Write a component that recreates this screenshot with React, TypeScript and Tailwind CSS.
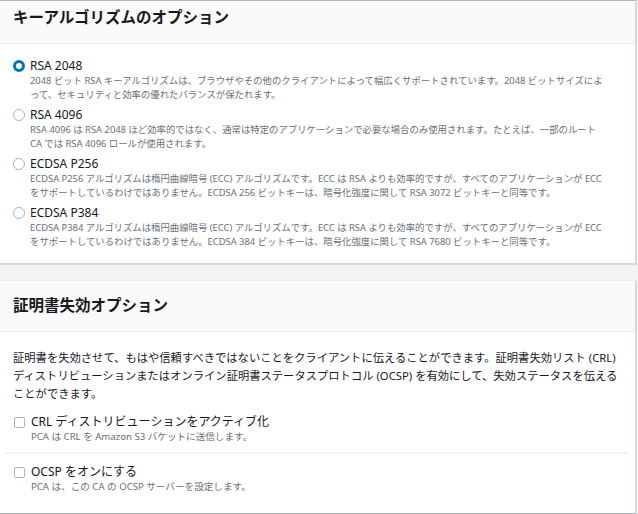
const font = { fontFamily: '"Noto Sans", "Noto Sans CJK JP", sans-serif' }

const keyOptions = [
  {
    id: "rsa2048",
    label: "RSA 2048",
    checked: true,
    desc: [
      "2048 ビット RSA キーアルゴリズムは、ブラウザやその他のクライアントによって幅広くサポートされています。2048 ビットサイズによ",
      "って、セキュリティと効率の優れたバランスが保たれます。",
    ],
  },
  {
    id: "rsa4096",
    label: "RSA 4096",
    checked: false,
    desc: [
      "RSA 4096 は RSA 2048 ほど効率的ではなく、通常は特定のアプリケーションで必要な場合のみ使用されます。たとえば、一部のルート",
      "CA では RSA 4096 ロールが使用されます。",
    ],
  },
  {
    id: "p256",
    label: "ECDSA P256",
    checked: false,
    desc: [
      "ECDSA P256 アルゴリズムは楕円曲線暗号 (ECC) アルゴリズムです。ECC は RSA よりも効率的ですが、すべてのアプリケーションが ECC",
      "をサポートしているわけではありません。ECDSA 256 ビットキーは、暗号化強度に関して RSA 3072 ビットキーと同等です。",
    ],
  },
  {
    id: "p384",
    label: "ECDSA P384",
    checked: false,
    desc: [
      "ECDSA P384 アルゴリズムは楕円曲線暗号 (ECC) アルゴリズムです。ECC は RSA よりも効率的ですが、すべてのアプリケーションが ECC",
      "をサポートしているわけではありません。ECDSA 384 ビットキーは、暗号化強度に関して RSA 7680 ビットキーと同等です。",
    ],
  },
]

const intro = [
  "証明書を失効させて、もはや信頼すべきではないことをクライアントに伝えることができます。証明書失効リスト (CRL)",
  "ディストリビューションまたはオンライン証明書ステータスプロトコル (OCSP) を有効にして、失効ステータスを伝える",
  "ことができます。",
]

const Radio = ({ checked }: { checked: boolean }) =>
  checked ? (
    <span className="mt-[2px] w-[12px] h-[12px] rounded-full border-[3.5px] border-[#0073bb] bg-white shrink-0" />
  ) : (
    <span className="mt-[2px] w-[12px] h-[12px] rounded-full border border-[#aab7b8] bg-white shrink-0" />
  )

const Checkbox = () => (
  <span className="mt-[3px] w-[11px] h-[11px] rounded-[2px] border border-[#aab7b8] bg-white shrink-0" />
)

export default function App() {
  return (
    <div className="w-[638px] h-[514px] bg-[#f2f3f3] overflow-hidden" style={font}>
      <section className="w-[637px] bg-white border-t border-r-2 border-b-2 border-t-[#aab7b8] border-r-[#d5dbdb] border-b-[#d5dbdb]">
        <div className="h-[43px] bg-[#fafafa] border-b border-[#eaeded] px-[13px] pt-[6px]">
          <h2 className="text-[15.5px] leading-[20px] font-bold text-[#16191f]">
            キーアルゴリズムのオプション
          </h2>
        </div>
        <div className="pt-[14px] pb-[14px] pl-[13px] flex flex-col gap-[5px]">
          {keyOptions.map((o) => (
            <label key={o.id} className="flex gap-[5px]">
              <Radio checked={o.checked} />
              <div className="flex flex-col">
                <span className="text-[12px] leading-[16px] text-[#16191f]">{o.label}</span>
                {o.desc.map((d, i) => (
                  <span key={i} className="text-[9.4px] leading-[14px] text-[#687078] whitespace-nowrap">
                    {d}
                  </span>
                ))}
              </div>
            </label>
          ))}
        </div>
      </section>

      <section className="mt-[15px] w-[637px] bg-white border-t border-r-2 border-b-2 border-t-[#eaeded] border-r-[#d5dbdb] border-b-[#aab7b8]">
        <div className="h-[51px] bg-[#fafafa] border-b border-[#eaeded] px-[13px] pt-[14px]">
          <h2 className="text-[15.5px] leading-[20px] font-bold text-[#16191f]">
            証明書失効オプション
          </h2>
        </div>
        <div className="pt-[17px] px-[13px] flex flex-col">
          {intro.map((l, i) => (
            <span key={i} className="text-[11.3px] leading-[18px] text-[#16191f] whitespace-nowrap">
              {l}
            </span>
          ))}
        </div>
        <div className="pt-[11px] pl-[14px] flex gap-[6px]">
          <Checkbox />
          <div className="flex flex-col">
            <span className="text-[12px] leading-[16px] text-[#16191f]">CRL ディストリビューションをアクティブ化</span>
            <span className="text-[9.6px] leading-[14px] text-[#687078]">PCA は CRL を Amazon S3 バケットに送信します。</span>
          </div>
        </div>
        <div className="mt-[8px] ml-[5px] mr-[6px] border-t-2 border-[#f2f3f3]" />
        <div className="pt-[10px] pb-[19px] pl-[14px] flex gap-[6px]">
          <Checkbox />
          <div className="flex flex-col">
            <span className="text-[12px] leading-[16px] text-[#16191f]">OCSP をオンにする</span>
            <span className="text-[9.6px] leading-[14px] text-[#687078]">PCA は、この CA の OCSP サーバーを設定します。</span>
          </div>
        </div>
      </section>
    </div>
  )
}
